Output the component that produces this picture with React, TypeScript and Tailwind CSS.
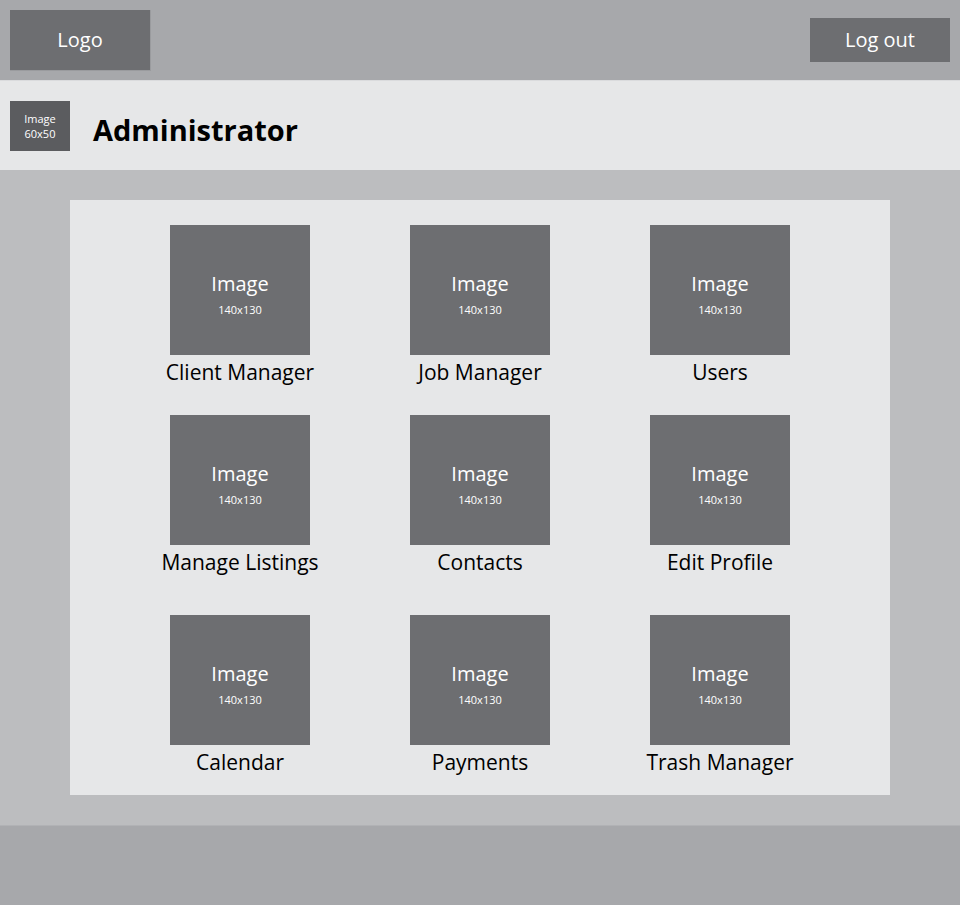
const tiles = [
  ['Client Manager', 'Job Manager', 'Users'],
  ['Manage Listings', 'Contacts', 'Edit Profile'],
  ['Calendar', 'Payments', 'Trash Manager'],
];

function Tile({ label }: { label: string }) {
  return (
    <div className="flex flex-col items-center">
      <div className="w-[140px] h-[130px] bg-[#6d6e71] flex flex-col items-center pt-[47px] text-white">
        <span className="text-[20px] leading-[24px]">Image</span>
        <span className="text-[11px] leading-[14px] mt-[7px]">140x130</span>
      </div>
      <span className="mt-[3px] text-[21px] leading-[28px] text-black whitespace-nowrap">{label}</span>
    </div>
  );
}

export default function App() {
  return (
    <div className="w-[960px] h-[905px] flex flex-col font-['Open_Sans',sans-serif]">
      <header className="h-[80px] bg-[#a7a8ab] flex items-start justify-between px-[10px]">
        <div className="mt-[10px] w-[141px] h-[61px] bg-[#6d6e71] border-r border-b border-[#9a9b9e] flex items-center justify-center text-white text-[20px]">
          Logo
        </div>
        <button className="mt-[18px] w-[140px] h-[44px] bg-[#6d6e71] text-white text-[20px] flex items-center justify-center">
          Log out
        </button>
      </header>

      <div className="h-[90px] bg-[#e6e7e8] border-t border-[#dadbdd] flex items-center px-[10px]">
        <div className="w-[60px] h-[50px] bg-[#5b5c5f] flex flex-col items-center justify-center text-white text-[11px] leading-[15px]">
          <span>Image</span>
          <span>60x50</span>
        </div>
        <h1 className="ml-[23px] mt-[8px] text-[29px] font-bold text-black leading-none">Administrator</h1>
      </div>

      <main className="h-[655px] bg-[#bcbdbf] pt-[30px] px-[70px]">
        <div className="h-[595px] bg-[#e6e7e8] pt-[25px] flex flex-col items-center">
          {tiles.map((row, i) => (
            <div
              key={i}
              className={
                i === 0
                  ? 'grid grid-cols-[240px_240px_240px]'
                  : i === 1
                  ? 'grid grid-cols-[240px_240px_240px] mt-[29px]'
                  : 'grid grid-cols-[240px_240px_240px] mt-[39px]'
              }
            >
              {row.map((label) => (
                <Tile key={label} label={label} />
              ))}
            </div>
          ))}
        </div>
      </main>

      <footer className="flex-1 bg-[#a7a8ab] border-t border-[#b1b2b5]" />
    </div>
  );
}
